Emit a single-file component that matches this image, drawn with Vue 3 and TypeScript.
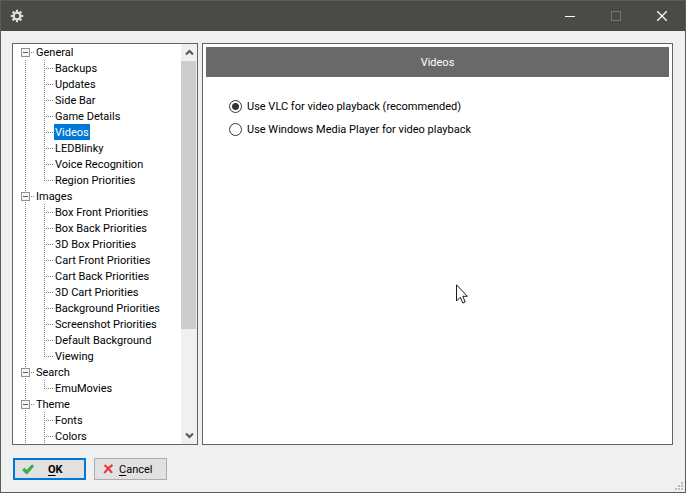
<script setup lang="ts">
import { computed, ref } from 'vue'

interface Group {
  name: string
  open: boolean
  pages: string[]
}

const groups = ref<Group[]>([
  {
    name: 'General',
    open: true,
    pages: ['Backups', 'Updates', 'Side Bar', 'Game Details', 'Videos', 'LEDBlinky', 'Voice Recognition', 'Region Priorities'],
  },
  {
    name: 'Images',
    open: true,
    pages: [
      'Box Front Priorities', 'Box Back Priorities', '3D Box Priorities', 'Cart Front Priorities', 'Cart Back Priorities',
      '3D Cart Priorities', 'Background Priorities', 'Screenshot Priorities', 'Default Background', 'Viewing',
    ],
  },
  { name: 'Search', open: true, pages: ['EmuMovies'] },
  { name: 'Theme', open: true, pages: ['Fonts', 'Colors'] },
])

const current = ref('Videos')
const player = ref('vlc')
const players = [
  { id: 'vlc', label: 'Use VLC for video playback (recommended)' },
  { id: 'wmp', label: 'Use Windows Media Player for video playback' },
]
const teeth = computed(() => Array.from({ length: 8 }, (_, i) => i * 45))

function endsBranch(g: number, p: number): boolean {
  return g < groups.value.length - 1 && p === groups.value[g].pages.length - 1
}
</script>

<template>
  <div class="window">
    <header class="titlebar">
      <svg class="gear" width="14" height="14" viewBox="0 0 14 14" aria-hidden="true">
        <rect v-for="a in teeth" :key="a" x="5.9" y=".8" width="2.2" height="3" fill="#dededc" :transform="`rotate(${a} 7 7)`" />
        <circle cx="7" cy="7" r="3.3" fill="none" stroke="#dededc" stroke-width="2.2" />
      </svg>
      <div class="caption">
        <button type="button" aria-label="Minimize">
          <svg width="10" height="10" viewBox="0 0 10 10"><path d="M0 5.5H10" stroke="#fff" /></svg>
        </button>
        <button type="button" aria-label="Maximize" disabled>
          <svg width="10" height="10" viewBox="0 0 10 10"><rect x=".5" y=".5" width="9" height="9" fill="none" stroke="#757471" /></svg>
        </button>
        <button type="button" aria-label="Close">
          <svg width="10" height="10" viewBox="0 0 10 10"><path d="M0 0L10 10M10 0L0 10" stroke="#fff" stroke-width="1.3" /></svg>
        </button>
      </div>
    </header>

    <main class="body">
      <nav class="sidebar">
        <ul class="tree">
          <li v-for="(group, g) in groups" :key="group.name">
            <div class="group" :class="{ first: g === 0 }">
              <button class="toggle" type="button" :aria-label="group.name" :aria-expanded="group.open" @click="group.open = !group.open">
                <svg width="9" height="9" viewBox="0 0 9 9">
                  <rect x=".5" y=".5" width="8" height="8" fill="#f4f4f4" stroke="#919191" />
                  <path d="M2 4.5H7" stroke="#3f5fb0" />
                  <path v-if="!group.open" d="M4.5 2V7" stroke="#3f5fb0" />
                </svg>
              </button>
              <span class="text">{{ group.name }}</span>
            </div>
            <ul v-if="group.open">
              <li v-for="(page, p) in group.pages" :key="page" class="page" :class="{ last: endsBranch(g, p) }">
                <button class="link" type="button" :class="{ selected: page === current }" @click="current = page">{{ page }}</button>
              </li>
            </ul>
          </li>
        </ul>
        <div class="scroll">
          <button type="button" aria-label="Scroll up">
            <svg width="9" height="7" viewBox="0 0 9 7"><path d="M1 5.5L4.5 2L8 5.5" fill="none" stroke="#555" stroke-width="2" /></svg>
          </button>
          <div class="track"><div class="thumb"></div></div>
          <button type="button" aria-label="Scroll down">
            <svg width="9" height="7" viewBox="0 0 9 7"><path d="M1 1.5L4.5 5L8 1.5" fill="none" stroke="#555" stroke-width="2" /></svg>
          </button>
        </div>
      </nav>

      <section class="content">
        <h1>{{ current }}</h1>
        <div class="options">
          <label v-for="item in players" :key="item.id">
            <input v-model="player" type="radio" name="player" :value="item.id" />
            <span class="text">{{ item.label }}</span>
          </label>
        </div>
      </section>
    </main>

    <footer class="actions">
      <button class="ok" type="button">
        <svg width="12" height="11" viewBox="0 0 12 11" aria-hidden="true">
          <path d="M.5 6L2.5 4.2L4.8 6.3L10 .8L11.6 2.2L5.4 9.8H4.2Z" fill="#32b44a" stroke="#27963c" stroke-width=".6" />
        </svg>
        <span class="text"><u>O</u>K</span>
      </button>
      <button class="cancel" type="button">
        <svg width="11" height="10" viewBox="0 0 11 10" aria-hidden="true">
          <path d="M1.5 1.2Q5 3.5 9 8.8M9.5 .8Q5 4 1.3 9" fill="none" stroke="#e9383c" stroke-width="2.1" />
        </svg>
        <span class="text"><u>C</u>ancel</span>
      </button>
      <svg class="grip" width="8" height="8" viewBox="0 0 8 8" aria-hidden="true">
        <path d="M6 0h2v2h-2zM3 3h2v2h-2zM6 3h2v2h-2zM0 6h2v2h-2zM3 6h2v2h-2zM6 6h2v2h-2z" fill="#bdbdbd" />
      </svg>
    </footer>

    <svg class="pointer" width="13" height="20" viewBox="0 0 13 20" aria-hidden="true">
      <path d="M1.5 .8V17L5.3 13.2L7.8 19L10.2 18L7.8 12.3H12.4Z" fill="#fff" stroke="#1b1b26" />
    </svg>
  </div>
</template>

<style>
body {
  margin: 0;
}
</style>

<style scoped>
.window {
  position: relative;
  display: flex;
  flex-direction: column;
  box-sizing: border-box;
  min-height: 100vh;
  border: 1px solid #5b5b59;
  background: #f0f0f0;
  color: #000;
  font: 11px/14px Tahoma, Roboto, sans-serif;
}
button {
  padding: 0;
  border: 0;
  background: none;
  color: inherit;
  font: inherit;
}
ul {
  margin: 0;
  padding: 0;
  list-style: none;
}
.text {
  padding-top: 2px;
}
.titlebar {
  display: flex;
  align-items: center;
  justify-content: space-between;
  height: 30px;
  padding-left: 9px;
  background: #4b4a47;
}
.caption {
  display: flex;
  height: 100%;
}
.caption button {
  display: grid;
  place-items: center;
  width: 46px;
}
.body {
  display: flex;
  flex: 1;
  gap: 4px;
  padding: 12px 12px 0 11px;
}
.sidebar {
  display: flex;
  box-sizing: border-box;
  width: 186px;
  border: 1px solid #646464;
  background: #fff;
}
.tree {
  flex: 1;
  overflow: hidden;
  white-space: nowrap;
  background: repeating-linear-gradient(#808080 0 1px, transparent 1px 2px) 12px 0 / 1px 100% no-repeat;
}
.group {
  display: flex;
  align-items: center;
  gap: 6px;
  height: 16px;
  padding-left: 8px;
  background: repeating-linear-gradient(90deg, #808080 0 1px, transparent 1px 2px) 18px 8px / 4px 1px no-repeat;
}
.group.first {
  background-color: #fff;
}
.toggle {
  display: flex;
}
.page {
  display: flex;
  height: 16px;
  padding-left: 41px;
  background:
    repeating-linear-gradient(#808080 0 1px, transparent 1px 2px) 31px 0 / 1px 100% no-repeat,
    repeating-linear-gradient(90deg, #808080 0 1px, transparent 1px 2px) 31px 8px / 10px 1px no-repeat;
}
.page.last {
  background-size: 1px 8px, 10px 1px;
}
.link {
  padding: 2px 1px 0;
}
.link.selected {
  background: #0078d7;
  color: #fff;
}
.scroll {
  display: flex;
  flex-direction: column;
  width: 16px;
  background: #f0f0f0;
}
.scroll button {
  display: grid;
  place-items: center;
  height: 17px;
}
.track {
  display: grid;
  flex: 1;
  grid-template-rows: 11fr 4fr;
}
.thumb {
  margin-right: 1px;
  background: #cdcdcd;
}
.content {
  flex: 1;
  border: 1px solid #646464;
  background: #fff;
}
h1 {
  margin: 3px;
  padding-top: 2px;
  background: #696969;
  color: #fff;
  font: inherit;
  line-height: 28px;
  text-align: center;
}
.options {
  display: flex;
  flex-direction: column;
  gap: 7px;
  padding: 18px 26px;
}
label {
  display: flex;
  align-items: center;
  gap: 5px;
}
input {
  appearance: none;
  box-sizing: border-box;
  width: 13px;
  height: 13px;
  margin: 0;
  border: 1px solid #333;
  border-radius: 50%;
  background: #fff;
}
input:checked {
  background: radial-gradient(circle, #333 3px, #fff 4px);
}
.actions {
  display: flex;
  gap: 8px;
  padding: 13px 2px 2px 12px;
}
.actions button {
  display: flex;
  align-items: center;
  box-sizing: border-box;
  width: 73px;
  height: 22px;
  margin-bottom: 10px;
  border: 1px solid #adadad;
  background: #e1e1e1;
}
.actions .ok {
  gap: 14px;
  padding-left: 7px;
  border: 2px solid #0078d7;
  font-weight: bold;
}
.actions .cancel {
  gap: 5px;
  padding-left: 8px;
}
u {
  text-underline-offset: 2px;
}
.grip {
  align-self: flex-end;
  margin-left: auto;
}
.pointer {
  position: absolute;
  top: 283px;
  left: 454px;
}
</style>
